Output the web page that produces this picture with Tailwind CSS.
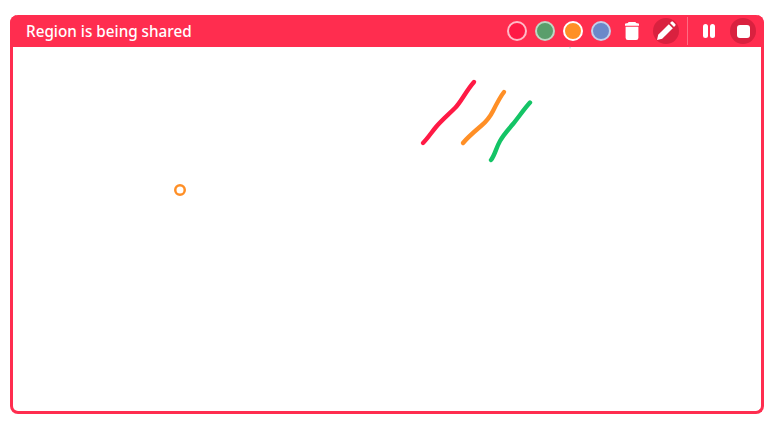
<!DOCTYPE html>
<html lang="en">
  <head>
    <meta charset="UTF-8" />
    <meta name="viewport" content="width=device-width, initial-scale=1.0" />
    <title>Region is being shared</title>
    <script src="https://cdn.jsdelivr.net/npm/@tailwindcss/browser@4"></script>
  </head>
  <body class="bg-white h-[424px] w-[774px] overflow-hidden pt-[15px] px-[10px] font-['Noto_Sans',sans-serif]">
    <div class="relative w-[754px] h-[399px] border-[3px] border-t-0 border-[#ff2d4f] rounded-lg bg-white">
      <!-- toolbar -->
      <div class="-mx-[3px] h-8 bg-[#ff2d4f] rounded-t-lg flex items-center pl-4 pr-2">
        <span class="text-white text-[15.25px] font-medium leading-none relative top-px">Region is being shared</span>
        <div class="ml-auto flex items-center">
          <button class="w-5 h-5 rounded-full bg-[#ff1a45] border-2 border-white/70"></button>
          <button class="ml-2 w-5 h-5 rounded-full bg-[#5a9e6b] border-2 border-white/60"></button>
          <button class="ml-2 w-5 h-5 rounded-full bg-[#ff9026] border-2 border-white"></button>
          <button class="ml-2 w-5 h-5 rounded-full bg-[#6b88c9] border-2 border-white/60"></button>
          <svg class="ml-[14px]" width="14" height="18" viewBox="0 0 14 18" fill="#fff">
            <path d="M4 0h6a1 1 0 0 1 1 1l2.500.4a.5.5 0 0 1 .5.5V3.800H0V1.900a.5.5 0 0 1 .5-.5L3 1a1 1 0 0 1 1-1z" />
            <path d="M.6 4.800h12.800v11a2.200 2.200 0 0 1-2.200 2.200H2.800a2.200 2.200 0 0 1-2.200-2.200z" />
          </svg>
          <div class="ml-[14px] w-[26px] h-[26px] rounded-full bg-[#d9213f] flex items-center justify-center">
            <svg width="20" height="20" viewBox="0 0 20 20" fill="#fff">
              <path d="M1 19l1.200-5.200L12.800 3.200l4 4L6.200 17.800z" />
              <path d="M14 2l1.300-1.200a1.200 1.200 0 0 1 1.700 0l2.200 2.200a1.200 1.200 0 0 1 0 1.700L18 6z" />
            </svg>
          </div>
          <div class="ml-2 w-px h-7 bg-white/30"></div>
          <div class="ml-[15px] flex gap-[2px]">
            <div class="w-[5px] h-[14px] rounded-sm bg-white"></div>
            <div class="w-[5px] h-[14px] rounded-sm bg-white"></div>
          </div>
          <div class="ml-[15px] w-[26px] h-[26px] rounded-full bg-[#d9213f] flex items-center justify-center">
            <div class="w-[13px] h-[13px] rounded-[3px] bg-white"></div>
          </div>
        </div>
      </div>
      <!-- drawing canvas, coordinates relative to the frame -->
      <svg class="absolute left-[-3px] top-0" width="754" height="399" viewBox="10 15 754 399" fill="none" stroke-width="4.400" stroke-linecap="round" stroke-linejoin="round">
        <path stroke="#ff1a45" d="M423 143 C428 138 431 133 436 127 C441 121 448 115 455 108 C461 102 466 91 474 82" />
        <path stroke="#ff8f26" d="M463 143 C468 137 474 132 481 126 C487 121 490 117 493 111 C496 105 500 97 504 92" />
        <path stroke="#14c466" d="M491 160 C495 155 496 148 500 141 C504 134 508 130 513 124 C518 118 524 109 530 102.500" />
        <circle cx="180" cy="190" r="4.750" stroke="#ff8f26" stroke-width="2.500" />
        <path stroke="#5fc7b0" stroke-width="1" stroke-opacity="0.6" d="M570 47v1" />
      </svg>
    </div>
  </body>
</html>
